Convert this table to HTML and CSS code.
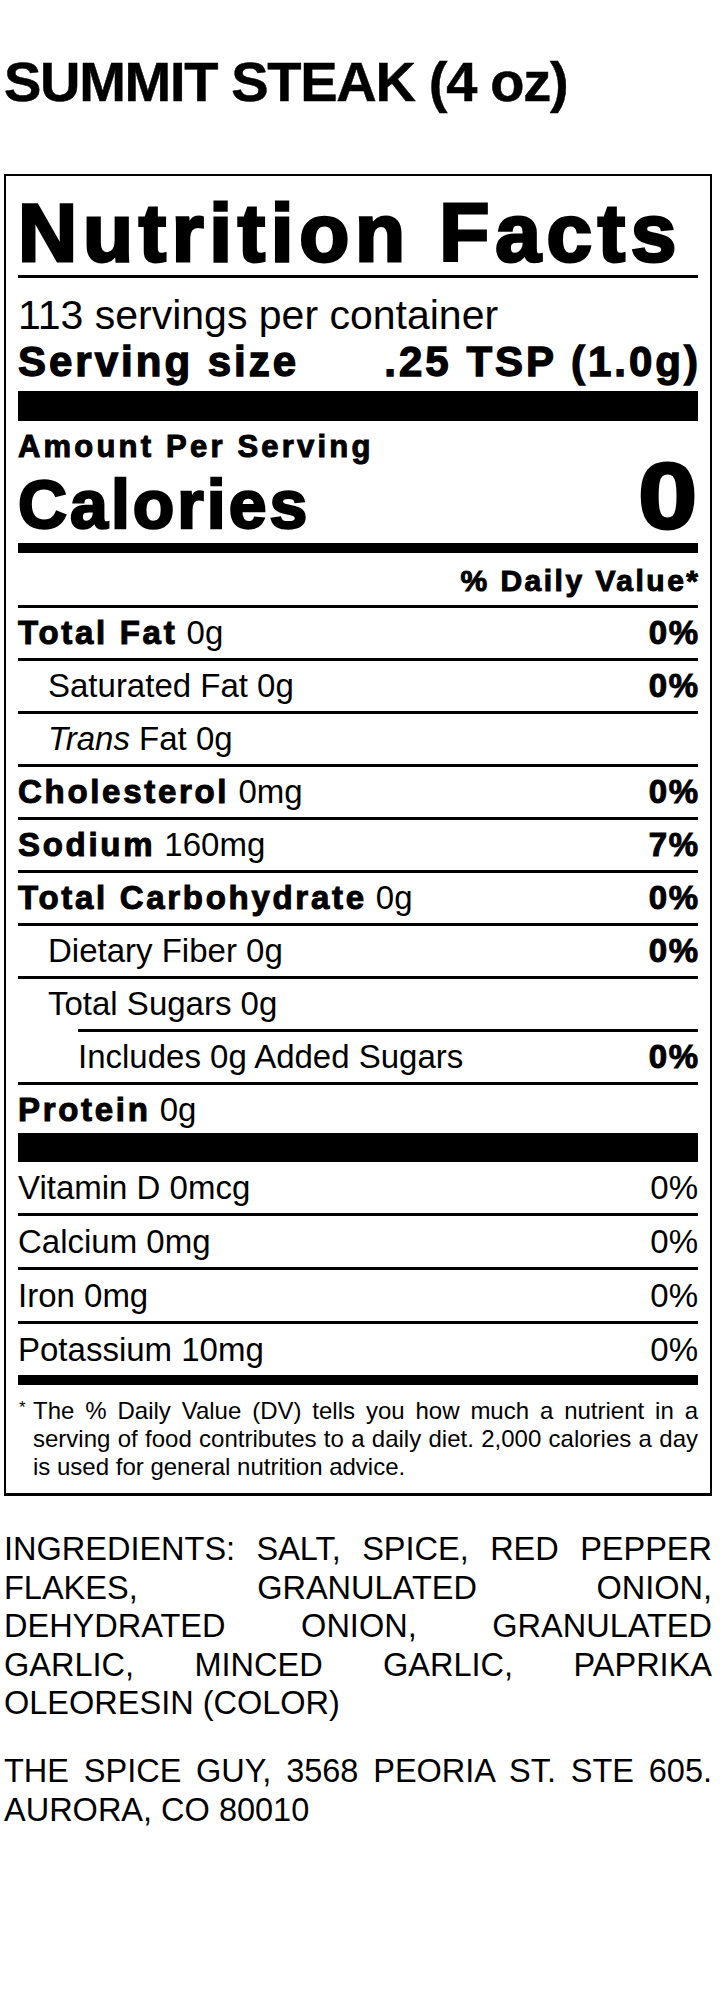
FILE: index.html
```html
<!DOCTYPE html>
<html lang="en">
<head>
<meta charset="utf-8">
<title>Summit Steak (4 oz) – Nutrition Facts</title>
<link rel="stylesheet" href="styles.css">
</head>
<body>
<h1 class="product-title">SUMMIT STEAK (4 oz)</h1>

<section class="nf">
  <h2 class="nf-title">Nutrition Facts</h2>

  <div class="servings">
    <div class="servings-count">113 servings per container</div>
    <div class="serving-size"><span>Serving size</span><span class="tight-right">.25 TSP (1.0g)</span></div>
  </div>

  <div class="calories-block">
    <div class="amount">Amount Per Serving</div>
    <div class="calories"><span class="cal-label">Calories</span><span class="cal-value">0</span></div>
  </div>

  <div class="dv-head"><span class="tight-right">% Daily Value*</span></div>

  <div class="nutrients">
    <div class="row"><span><b class="hv">Total Fat</b> 0g</span><b class="hv pct">0%</b></div>
    <div class="row sub"><span>Saturated Fat 0g</span><b class="hv pct">0%</b></div>
    <div class="row sub"><span><i>Trans</i> Fat 0g</span></div>
    <div class="row"><span><b class="hv">Cholesterol</b> 0mg</span><b class="hv pct">0%</b></div>
    <div class="row"><span><b class="hv">Sodium</b> 160mg</span><b class="hv pct">7%</b></div>
    <div class="row"><span><b class="hv">Total Carbohydrate</b> 0g</span><b class="hv pct">0%</b></div>
    <div class="row sub"><span>Dietary Fiber 0g</span><b class="hv pct">0%</b></div>
    <div class="row sub"><span>Total Sugars 0g</span></div>
    <div class="row subsub"><span>Includes 0g Added Sugars</span><b class="hv pct">0%</b></div>
    <div class="row protein"><span><b class="hv">Protein</b> 0g</span></div>
  </div>

  <div class="vitamins">
    <div class="vrow"><span>Vitamin D 0mcg</span><span>0%</span></div>
    <div class="vrow"><span>Calcium 0mg</span><span>0%</span></div>
    <div class="vrow"><span>Iron 0mg</span><span>0%</span></div>
    <div class="vrow"><span>Potassium 10mg</span><span>0%</span></div>
  </div>

  <div class="footnote">
    <span class="ast">*</span>
    <p class="fn-text">The % Daily Value (DV) tells you how much a nutrient in a serving of food contributes to a daily diet. 2,000 calories a day is used for general nutrition advice.</p>
  </div>
</section>

<p class="ingredients">INGREDIENTS: SALT, SPICE, RED PEPPER FLAKES, GRANULATED ONION, DEHYDRATED ONION, GRANULATED GARLIC, MINCED GARLIC, PAPRIKA OLEORESIN (COLOR)</p>

<p class="address">THE SPICE GUY, 3568 PEORIA ST. STE 605. AURORA, CO 80010</p>
</body>
</html>
```

FILE: styles.css
```css
html {
  background: #fff;
}

body {
  margin: 0;
  padding: 0 8px 0 4px;
  font-family: "Liberation Sans", Arial, Helvetica, sans-serif;
  color: #000;
  background: #fff;
}

.product-title {
  margin: 54px 0 0;
  font-size: 56px;
  line-height: 56px;
  font-weight: 700;
  letter-spacing: -1.3px;
  -webkit-text-stroke: 0.5px #000;
  white-space: nowrap;
}

/* ---------- Nutrition facts panel ---------- */
.nf {
  margin-top: 64px;
  border: 2px solid #000;
  border-bottom-width: 3px;
  padding: 0 12px;
}

.nf-title {
  margin: 15px 0 0;
  height: 84px;
  font-size: 82px;
  line-height: 84px;
  font-weight: 700;
  letter-spacing: 5.7px;
  -webkit-text-stroke: 3px #000;
  white-space: nowrap;
  border-bottom: 3px solid #000;
}

.servings {
  padding-top: 14px;
}

.servings-count {
  font-size: 41px;
  line-height: 46px;
  white-space: nowrap;
}

.serving-size {
  display: flex;
  justify-content: space-between;
  font-size: 42px;
  line-height: 48px;
  font-weight: 700;
  letter-spacing: 3px;
  -webkit-text-stroke: 1.3px #000;
  white-space: nowrap;
}

.tight-right {
  margin-right: -3px;
}

.calories-block {
  margin-top: 5px;
  border-top: 30px solid #000;
  padding-top: 7px;
}

.amount {
  font-size: 31px;
  line-height: 38px;
  font-weight: 700;
  letter-spacing: 3.2px;
  -webkit-text-stroke: 1px #000;
  white-space: nowrap;
}

.calories {
  display: flex;
  justify-content: space-between;
  align-items: baseline;
}

.cal-label {
  font-size: 68px;
  line-height: 76px;
  font-weight: 700;
  letter-spacing: 3px;
  -webkit-text-stroke: 2.4px #000;
}

.cal-value {
  font-size: 92px;
  line-height: 60px;
  font-weight: 700;
  -webkit-text-stroke: 3px #000;
  transform: scaleX(1.15);
  transform-origin: right center;
  margin-right: 1px;
}

.dv-head {
  margin-top: 1px;
  border-top: 10px solid #000;
  padding-top: 3px;
  height: 49px;
  font-size: 30px;
  line-height: 49px;
  font-weight: 700;
  letter-spacing: 2.5px;
  -webkit-text-stroke: 1px #000;
  text-align: right;
}

.dv-head .tight-right {
  margin-right: -2.5px;
}

/* ---------- nutrient rows ---------- */
.row {
  display: flex;
  justify-content: space-between;
  height: 50px;
  border-top: 3px solid #000;
  font-size: 33px;
  line-height: 50px;
  white-space: nowrap;
}

.hv {
  font-weight: 700;
  letter-spacing: 2.7px;
  -webkit-text-stroke: 1px #000;
}

.pct {
  letter-spacing: 1.5px;
  margin-right: -1.5px;
}

.row.sub > span:first-child {
  padding-left: 30px;
}

.row.subsub {
  margin-left: 60px;
}

.row.protein {
  height: 48px;
}

.vitamins {
  border-top: 29px solid #000;
}

.vrow {
  display: flex;
  justify-content: space-between;
  height: 51px;
  font-size: 33px;
  line-height: 51px;
  white-space: nowrap;
}

.vrow + .vrow {
  border-top: 3px solid #000;
}

/* ---------- footnote ---------- */
.footnote {
  display: flex;
  border-top: 10px solid #000;
  padding: 12px 0;
  font-size: 24px;
  line-height: 28px;
}

.ast {
  flex: none;
  width: 15px;
  padding-left: 1px;
  box-sizing: border-box;
  font-size: 17px;
  line-height: 22px;
}

.fn-text {
  margin: 0;
  flex: 1;
  text-align: justify;
}

/* ---------- ingredients / address ---------- */
.ingredients,
.address {
  font-size: 32.5px;
  line-height: 38.5px;
  text-align: justify;
}

.ingredients {
  margin: 34px 0 0;
}

.address {
  margin: 29.5px 0 0;
}
```
